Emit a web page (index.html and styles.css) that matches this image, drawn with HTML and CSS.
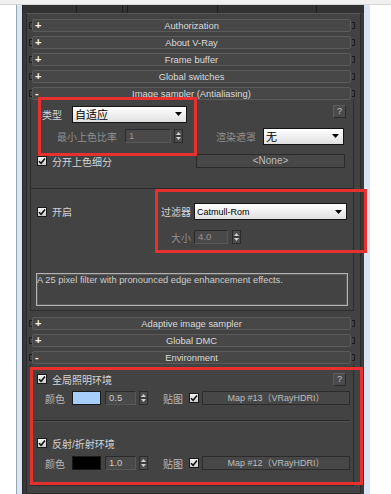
FILE: index.html
```html
<!DOCTYPE html>
<html lang="zh-CN">
<head>
    <meta charset="UTF-8">
    <meta name="viewport" content="width=device-width, initial-scale=1.0">
    <title>V-Ray 渲染设置</title>
    <link rel="stylesheet" href="styles.css">
</head>
<body>
    <div class="topbar"></div>
    <div class="window">
        <div class="max">
            <div class="tabs">
                <span class="tab t1"></span><span class="tab t2"></span><span class="tab t3"></span><span class="tab t4"></span><span class="tab t5"></span>
            </div>
            <div class="panel">
                <div class="roll"><i class="grip"></i><div class="bar"><b>+</b><span>Authorization</span></div><i class="grip r"></i></div>
                <div class="roll"><i class="grip"></i><div class="bar"><b>+</b><span>About V-Ray</span></div><i class="grip r"></i></div>
                <div class="roll"><i class="grip"></i><div class="bar"><b>+</b><span>Frame buffer</span></div><i class="grip r"></i></div>
                <div class="roll"><i class="grip"></i><div class="bar"><b>+</b><span>Global switches</span></div><i class="grip r"></i></div>
                <div class="roll open"><i class="grip"></i><div class="bar"><b>-</b><span>Image sampler (Antialiasing)</span></div><i class="grip r"></i></div>

                <!-- 图像采样器 -->
                <div class="body">
                    <div class="sec sampler">
                        <div class="row ra">
                            <div class="lft">
                                <label>类型</label>
                                <div class="sel cn w-type"><span>自适应</span><svg width="7" height="4" viewBox="0 0 7 4"><path d="M0 0H7L3.5 4Z"/></svg></div>
                            </div>
                            <div class="rgt"><div class="help">?</div></div>
                        </div>
                        <div class="row rb">
                            <div class="lft">
                                <label class="dim">最小上色比率</label>
                                <div class="num w-rate">1</div>
                                <span class="spin"><svg width="7" height="12" viewBox="0 0 7 12"><path d="M1 5L3.5 2L6 5ZM1 7L3.5 10L6 7Z"/><path class="mid" d="M0 6H7"/></svg></span>
                            </div>
                            <div class="rgt">
                                <label class="dim">渲染遮罩</label>
                                <div class="sel cn w-mask"><span>无</span><svg width="7" height="4" viewBox="0 0 7 4"><path d="M0 0H7L3.5 4Z"/></svg></div>
                            </div>
                        </div>
                        <div class="row rc">
                            <div class="lft">
                                <span class="chk"><svg width="8" height="8" viewBox="0 0 8 8"><path d="M1 4.2L3.1 6.3L7 1.6"/></svg></span>
                                <label>分开上色细分</label>
                            </div>
                            <div class="rgt"><div class="btn w-none">&lt;None&gt;</div></div>
                        </div>
                    </div>

                    <div class="sec filter">
                        <div class="row f1">
                            <div class="lft">
                                <span class="chk"><svg width="8" height="8" viewBox="0 0 8 8"><path d="M1 4.2L3.1 6.3L7 1.6"/></svg></span>
                                <label>开启</label>
                            </div>
                            <label class="cap">过滤器</label>
                            <div class="sel w-filter"><span>Catmull-Rom</span><svg width="7" height="4" viewBox="0 0 7 4"><path d="M0 0H7L3.5 4Z"/></svg></div>
                        </div>
                        <div class="row f2">
                            <div class="lft"></div>
                            <label class="cap dim">大小</label>
                            <div class="num w-size">4.0</div>
                            <span class="spin"><svg width="7" height="12" viewBox="0 0 7 12"><path d="M1 5L3.5 2L6 5ZM1 7L3.5 10L6 7Z"/><path class="mid" d="M0 6H7"/></svg></span>
                        </div>
                        <div class="desc">A 25 pixel filter with pronounced edge enhancement effects.</div>
                    </div>
                </div>

                <div class="roll"><i class="grip"></i><div class="bar"><b>+</b><span>Adaptive image sampler</span></div><i class="grip r"></i></div>
                <div class="roll"><i class="grip"></i><div class="bar"><b>+</b><span>Global DMC</span></div><i class="grip r"></i></div>
                <div class="roll open"><i class="grip"></i><div class="bar"><b>-</b><span>Environment</span></div><i class="grip r"></i></div>

                <!-- 环境 -->
                <div class="body">
                    <div class="sec env">
                        <div class="row e1">
                            <div class="lft">
                                <span class="chk"><svg width="8" height="8" viewBox="0 0 8 8"><path d="M1 4.2L3.1 6.3L7 1.6"/></svg></span>
                                <label>全局照明环境</label>
                            </div>
                            <div class="rgt"><div class="help">?</div></div>
                        </div>
                        <div class="row e2">
                            <label class="soft">颜色</label>
                            <span class="sw blue"></span>
                            <div class="num lit w-mult">0.5</div>
                            <span class="spin"><svg width="7" height="12" viewBox="0 0 7 12"><path d="M1 5L3.5 2L6 5ZM1 7L3.5 10L6 7Z"/><path class="mid" d="M0 6H7"/></svg></span>
                            <label class="soft map-lbl">贴图</label>
                            <span class="chk"><svg width="8" height="8" viewBox="0 0 8 8"><path d="M1 4.2L3.1 6.3L7 1.6"/></svg></span>
                            <div class="btn w-map">Map #13（VRayHDRI）</div>
                        </div>
                        <div class="sep"></div>
                        <div class="row e3">
                            <div class="lft">
                                <span class="chk"><svg width="8" height="8" viewBox="0 0 8 8"><path d="M1 4.2L3.1 6.3L7 1.6"/></svg></span>
                                <label>反射/折射环境</label>
                            </div>
                        </div>
                        <div class="row e2 e4">
                            <label class="soft">颜色</label>
                            <span class="sw black"></span>
                            <div class="num lit w-mult">1.0</div>
                            <span class="spin"><svg width="7" height="12" viewBox="0 0 7 12"><path d="M1 5L3.5 2L6 5ZM1 7L3.5 10L6 7Z"/><path class="mid" d="M0 6H7"/></svg></span>
                            <label class="soft map-lbl">贴图</label>
                            <span class="chk"><svg width="8" height="8" viewBox="0 0 8 8"><path d="M1 4.2L3.1 6.3L7 1.6"/></svg></span>
                            <div class="btn w-map">Map #12（VRayHDRI）</div>
                        </div>
                    </div>
                </div>
            </div>
        </div>
    </div>

    <!-- 标注红框 -->
    <div class="note n1"></div>
    <div class="note n2"></div>
    <div class="note n3"></div>
</body>
</html>
```

FILE: styles.css
```css
*{
    margin:0;
    padding:0;
    box-sizing:border-box;
}
body{
    position:relative;
    width:391px;
    height:494px;
    overflow:hidden;
    background:#fff;
    font-family:"Liberation Sans","Noto Sans CJK SC",sans-serif;
    font-size:10px;
    color:#d4d4d4;
}
label{
    display:block;
    white-space:nowrap;
}

/* 窗口外框 */
.topbar{
    height:5px;
    background:#f0f0f0;
    border-bottom:1px solid #d6d6d6;
}
.window{
    width:354px;
    height:489px;
    margin-left:16px;
    padding:0 6px 0 5px;
    background:#d9e5f3;
    border-left:1px solid #98a5b3;
}
.max{
    height:100%;
    padding:0 3px;
    background:#393939;
    border-left:1px solid #252525;
}
.tabs{
    display:flex;
    height:8px;
    margin:0 -3px;
    background:#323232;
}
.tab{
    height:8px;
    border-right:1px solid #1e1e1e;
}
.t1{width:54px;}
.t2{width:46px;}
.t3{width:5px;}
.t4{width:90px;}
.t5{width:99px;}
.panel{
    height:481px;
    padding:5px 5px 0 2px;
    background:#424242;
    border:1px solid #2a2a2a;
    border-top-color:#575757;
}

/* 卷展栏标题 */
.roll{
    display:flex;
    align-items:center;
    height:13px;
    margin-bottom:4px;
}
.roll.open{
    margin-bottom:0;
}
.grip{
    width:3px;
    height:7px;
    border:1px solid #1c1c1c;
    border-right:0;
}
.grip.r{
    margin-left:1px;
    border-left:0;
    border-right:1px solid #1c1c1c;
}
.bar{
    display:grid;
    grid-template-columns:14px 1fr 14px;
    align-items:center;
    width:319px;
    height:13px;
    background:#474747;
    border:1px solid #5b5b5b;
    border-radius:2px;
    line-height:11px;
}
.bar b{
    padding-left:2px;
    color:#f4f4f4;
    font-size:11px;
}
.bar span{
    text-align:center;
    font-size:9.4px;
    color:#dadada;
}

/* 卷展栏内容 */
.body{
    width:324px;
    margin:0 1px 6px;
    background:#434343;
    border:1px solid #2c2c2c;
    border-top:0;
}
.row{
    display:flex;
    align-items:center;
}
.lft{
    display:flex;
    align-items:center;
}
.rgt{
    display:flex;
    align-items:center;
    flex:1;
}
.dim{color:#8f8f8f;}
.soft{color:#b9b9b9;}

.sampler{
    height:89px;
    padding-top:5px;
    border-bottom:1px solid #2a2a2a;
}
.sampler .lft{width:165px;}
.ra{height:18px;}
.ra .lft{padding-left:11px;}
.ra .rgt{
    align-self:flex-start;
    justify-content:flex-end;
    padding-right:7px;
}
.rb{
    height:18px;
    margin-top:4px;
}
.rb .lft{padding-left:26px;}
.rb .rgt{padding-left:20px;}
.rc{
    height:14px;
    margin-top:9px;
}
.rc .lft{padding-left:6px;}

.w-type{width:115px;margin-left:10px;}
.w-rate{width:46px;margin-left:8px;}
.rb .spin{margin-left:3px;}
.w-mask{width:81px;margin-left:7px;}
.w-none{width:149px;}

.filter{
    height:121px;
    padding-top:14px;
}
.filter .lft{
    width:130px;
    padding-left:6px;
}
.f1{height:17px;}
.f2{
    height:14px;
    margin-top:10px;
}
.cap{
    width:30px;
    text-align:right;
}
.w-filter{width:153px;margin-left:3px;}
.w-size{width:34px;margin-left:3px;}
.f2 .spin{margin-left:4px;}
.desc{
    width:312px;
    height:33px;
    margin:29px 0 0 5px;
    border:1px solid #b2b2b2;
    box-shadow:inset 0 0 0 1px #5c5c5c;
    color:#cdcdcd;
    font-size:9.3px;
    line-height:12px;
    white-space:nowrap;
}

.env{
    height:121px;
    padding-top:8px;
}
.e1,.e3{height:14px;}
.e1 .lft,.e3 .lft{padding-left:6px;}
.e1 .rgt{
    justify-content:flex-end;
    padding-right:7px;
}
.e2{
    height:14px;
    margin-top:5px;
    padding-left:14px;
}
.e2 .sw{margin-left:7px;}
.w-mult{width:31px;margin-left:4px;}
.e2 .spin{margin-left:3px;}
.map-lbl{margin-left:15px;}
.e2 .chk{margin-left:6px;}
.w-map{width:148px;margin-left:3px;font-size:9px;}
.sep{
    height:2px;
    margin:15px 3px 0 0;
    border-top:1px solid #272727;
    border-bottom:1px solid #525252;
}
.e3{margin-top:14px;}
.e4{margin-top:6px;}

/* 控件 */
.chk label,.lft .chk + label{margin-left:5px;}
.chk{
    display:flex;
    align-items:center;
    justify-content:center;
    width:10px;
    height:10px;
    flex-shrink:0;
    background:linear-gradient(#f4f4f4,#cbcbcb);
    border:1px solid #1a1a1a;
}
.chk path{
    fill:none;
    stroke:#111;
    stroke-width:1.6;
}
.sel{
    display:flex;
    align-items:center;
    justify-content:space-between;
    height:17px;
    padding:0 4px 0 2px;
    background:linear-gradient(#ffffff,#e0e0e0);
    border:1px solid #151515;
    color:#000;
    font-size:9px;
}
.sel.cn{font-size:11px;}
.sel svg path{fill:#000;}
.num{
    height:14px;
    padding-left:3px;
    background:#494949;
    border:1px solid #2a2a2a;
    border-right-color:#585858;
    border-bottom-color:#585858;
    color:#959595;
    font-size:9.5px;
    line-height:12px;
}
.num.lit{color:#cacaca;}
.spin{
    display:flex;
    align-items:center;
    justify-content:center;
    width:9px;
    height:14px;
    background:#4d4d4d;
    border:1px solid #2b2b2b;
}
.spin path{fill:#cfcfcf;}
.spin path.mid{
    fill:none;
    stroke:#2e2e2e;
    stroke-width:1;
}
.help{
    width:13px;
    height:13px;
    background:#4b4b4b;
    border:1px solid #2a2a2a;
    border-top-color:#5e5e5e;
    border-left-color:#5e5e5e;
    color:#c4c4c4;
    font-size:9px;
    line-height:11px;
    text-align:center;
}
.btn{
    height:14px;
    background:#474747;
    border:1px solid #2b2b2b;
    color:#bcbcbc;
    line-height:12px;
    text-align:center;
    white-space:nowrap;
}
.sw{
    width:29px;
    height:14px;
    border:1px solid #1a1a1a;
}
.sw.blue{background:#a7cefa;}
.sw.black{background:#000;}

/* 红色标注框 */
.note{
    position:absolute;
    border:3px solid #e8302f;
}
.n1{left:38px;top:97px;width:159px;height:59px;}
.n2{left:155px;top:189px;width:212px;height:64px;}
.n3{left:30px;top:367px;width:333px;height:118px;}
```
